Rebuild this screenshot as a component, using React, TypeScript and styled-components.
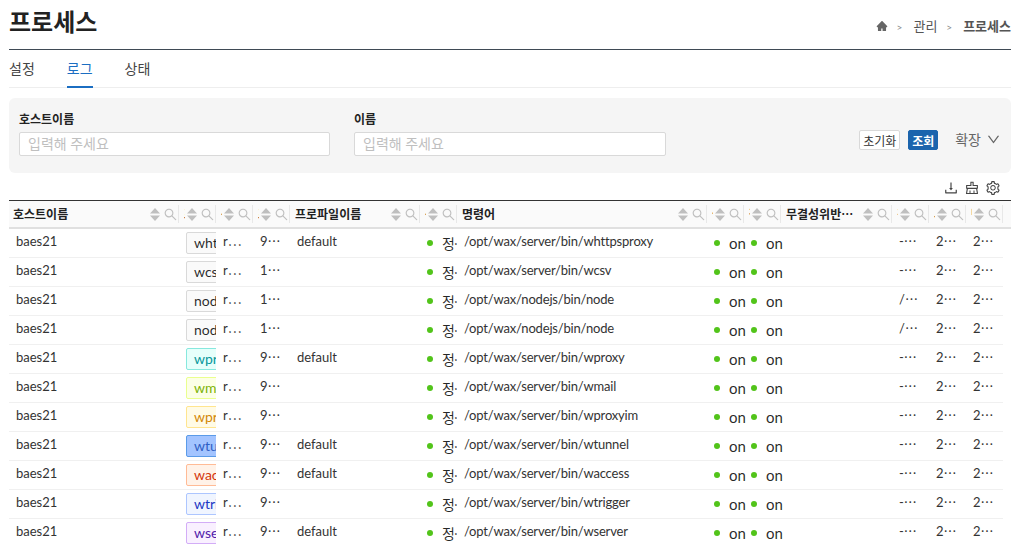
import {AiFillHome, AiOutlineClear, AiOutlineDown, AiOutlineDownload, AiOutlineSearch, AiOutlineSetting} from 'react-icons/ai';
import styled, {createGlobalStyle} from 'styled-components';

const GlobalStyle = createGlobalStyle`
  html, body {
    margin: 0;
    height: 545px;
    overflow: hidden;
    background: #fff;
    font-family: Lato, "Noto Sans CJK KR", sans-serif;
    font-size: 14px;
    color: rgba(0, 0, 0, 0.85);
  }
  * {
    box-sizing: border-box;
  }
`;

const COLUMNS = '170px 37px 37px 37px 130px 37px 250px 37px 37px 111px 37px 37px 37px';

const headers = [
  '호스트이름',
  '프로세스이름',
  '상태값',
  '프로세스아이디',
  '프로파일이름',
  '상태',
  '명령어',
  '실행',
  '감시',
  '무결성위반⋯',
  '경로',
  '시작시간',
  '변경시간',
];

const tagColors: Record<string, {bg: string; border: string; text: string}> = {
  plain: {bg: '#fafafa', border: '#d9d9d9', text: 'rgba(0,0,0,0.85)'},
  cyan: {bg: '#e6fffb', border: '#87e8de', text: '#08979c'},
  lime: {bg: '#fcffe6', border: '#eaff8f', text: '#7cb305'},
  gold: {bg: '#fffbe6', border: '#ffe58f', text: '#d48806'},
  blue: {bg: '#a3c4ff', border: '#5b9be8', text: '#2f5fc4'},
  volcano: {bg: '#fff2e8', border: '#ffbb96', text: '#d4380d'},
  geekblue: {bg: '#f0f5ff', border: '#adc6ff', text: '#1d39c4'},
  purple: {bg: '#f9f0ff', border: '#d3adf7', text: '#531dab'},
};

const rows = [
  {name: 'whttpsproxy', color: 'plain', pid: '9⋯', profile: 'default', command: '/opt/wax/server/bin/whttpsproxy', path: '-⋯'},
  {name: 'wcsv', color: 'plain', pid: '1⋯', profile: '', command: '/opt/wax/server/bin/wcsv', path: '-⋯'},
  {name: 'node', color: 'plain', pid: '1⋯', profile: '', command: '/opt/wax/nodejs/bin/node', path: '/⋯'},
  {name: 'node', color: 'plain', pid: '1⋯', profile: '', command: '/opt/wax/nodejs/bin/node', path: '/⋯'},
  {name: 'wproxy', color: 'cyan', pid: '9⋯', profile: 'default', command: '/opt/wax/server/bin/wproxy', path: '-⋯'},
  {name: 'wmail', color: 'lime', pid: '9⋯', profile: '', command: '/opt/wax/server/bin/wmail', path: '-⋯'},
  {name: 'wproxyim', color: 'gold', pid: '9⋯', profile: '', command: '/opt/wax/server/bin/wproxyim', path: '-⋯'},
  {name: 'wtunnel', color: 'blue', pid: '9⋯', profile: 'default', command: '/opt/wax/server/bin/wtunnel', path: '-⋯'},
  {name: 'waccess', color: 'volcano', pid: '9⋯', profile: 'default', command: '/opt/wax/server/bin/waccess', path: '-⋯'},
  {name: 'wtrigger', color: 'geekblue', pid: '9⋯', profile: '', command: '/opt/wax/server/bin/wtrigger', path: '-⋯'},
  {name: 'wserver', color: 'purple', pid: '9⋯', profile: 'default', command: '/opt/wax/server/bin/wserver', path: '-⋯'},
];

const Page = styled.div`
  padding: 0 8px 0 9px;
  height: 545px;
  overflow: hidden;
`;

const TitleBar = styled.header`
  display: flex;
  align-items: flex-end;
  justify-content: space-between;
  height: 50px;
  padding-bottom: 9px;
  border-bottom: 1px solid #3f4a55;
`;

const Title = styled.h1`
  margin: 0;
  font-size: 24px;
  line-height: 36px;
  font-weight: 700;
  color: #222;
`;

const Breadcrumb = styled.nav`
  display: flex;
  align-items: center;
  margin-bottom: 3px;
  font-size: 13px;
  line-height: 20px;
  color: #555;
`;

const HomeIcon = styled(AiFillHome)`
  font-size: 12px;
  color: #666;
`;

const Crumb = styled.span<{$current?: boolean}>`
  font-weight: ${(p) => (p.$current ? 700 : 400)};
`;

const CrumbSep = styled.span`
  margin: 2px 11px 0 9px;
  font-size: 10px;
  color: #888;
`;

const Tabs = styled.div`
  display: flex;
  gap: 32px;
  height: 38px;
  border-bottom: 1px solid #eee;
`;

const Tab = styled.div<{$active?: boolean}>`
  height: 38px;
  padding-top: 9px;
  font-size: 14px;
  line-height: 20px;
  color: ${(p) => (p.$active ? '#1b6ec2' : '#444')};
  border-bottom: ${(p) => (p.$active ? '2px solid #1b6ec2' : 'none')};
`;

const SearchPanel = styled.section`
  display: flex;
  align-items: flex-end;
  height: 75px;
  margin-top: 10px;
  padding: 14px 10px 17px;
  border-radius: 6px;
  background: #f5f5f5;
`;

const Field = styled.label<{$width: number}>`
  display: flex;
  flex-direction: column;
  gap: 4px;
  width: ${(p) => p.$width}px;
  margin-right: 24px;
`;

const FieldLabel = styled.span`
  font-size: 12px;
  line-height: 16px;
  font-weight: 700;
  color: #222;
`;

const TextInput = styled.input`
  height: 24px;
  padding: 0 8px 2px;
  border: 1px solid #d9d9d9;
  border-radius: 2px;
  background: #fff;
  font: inherit;
  font-size: 14px;
  &::placeholder {
    color: #bfbfbf;
  }
`;

const Actions = styled.div`
  display: flex;
  align-items: center;
  margin-left: auto;
  height: 20px;
  margin-bottom: 6px;
`;

const ResetButton = styled.button`
  height: 20px;
  width: 41px;
  margin-right: 8px;
  padding: 0;
  border: 1px solid #d9d9d9;
  border-radius: 2px;
  background: #fff;
  font: inherit;
  font-size: 12px;
  color: #333;
`;

const QueryButton = styled.button`
  height: 20px;
  width: 30px;
  margin-right: 17px;
  padding: 0;
  border: 1px solid #1b64ad;
  border-radius: 2px;
  background: #1b64ad;
  font: inherit;
  font-size: 12px;
  font-weight: 700;
  color: #fff;
`;

const ExpandLink = styled.span`
  display: flex;
  align-items: center;
  gap: 5px;
  margin-bottom: 2px;
  font-size: 14px;
  color: #666;
  svg {
    font-size: 15px;
  }
`;

const Toolbar = styled.div`
  display: flex;
  justify-content: flex-end;
  align-items: center;
  gap: 5px;
  height: 27px;
  padding: 3px 10px 0 0;
  font-size: 16px;
  color: #444;
`;

const Table = styled.div`
  border-top: 1px solid #333;
`;

const HeaderRow = styled.div`
  display: grid;
  grid-template-columns: ${COLUMNS};
  height: 28px;
  background: #fafafa;
  border-bottom: 2px solid #e0e0e0;
`;

const HeaderCell = styled.div`
  position: relative;
  display: flex;
  align-items: center;
  min-width: 0;
  padding: 0 1.5px 0 5px;
  &:first-child {
    padding-left: 4px;
  }
  &::after {
    content: '';
    position: absolute;
    right: 0;
    top: 4px;
    bottom: 4px;
    width: 1px;
    background: #e8e8e8;
  }
`;

const HeaderTitle = styled.span`
  flex: 1;
  min-width: 0;
  padding-bottom: 2px;
  overflow: hidden;
  white-space: nowrap;
  font-size: 12px;
  font-weight: 700;
  color: #222;
`;

const SortIcon = styled.svg`
  flex: none;
  width: 10px;
  height: 13px;
  margin: 0 2.5px 0 2px;
  fill: #bfbfbf;
`;

const SearchIcon = styled(AiOutlineSearch)`
  flex: none;
  font-size: 15px;
  color: #bfbfbf;
`;

const Row = styled.div`
  display: grid;
  grid-template-columns: ${COLUMNS};
  height: 29px;
  width: 994px;
  border-bottom: 1px solid #f0f0f0;
`;

const Cell = styled.div`
  min-width: 0;
  padding: 0 7px;
  font-size: 13px;
  line-height: 25px;
  color: #333;
  white-space: nowrap;
`;

const CommandCell = styled(Cell)`
  letter-spacing: -0.18px;
`;

const TagCell = styled.div`
  min-width: 0;
  padding: 3px 0 0 7px;
  overflow: hidden;
`;

const Tag = styled.span<{$color: string}>`
  display: inline-block;
  height: 22px;
  padding: 0 7px;
  border: 1px solid ${(p) => tagColors[p.$color].border};
  border-radius: 2px;
  background: ${(p) => tagColors[p.$color].bg};
  color: ${(p) => tagColors[p.$color].text};
  font-size: 14px;
  line-height: 20px;
  white-space: nowrap;
`;

const StatusCell = styled.div`
  display: flex;
  align-items: center;
  gap: 9px;
  min-width: 0;
  height: 27px;
  padding-left: 7px;
  font-size: 15px;
  white-space: nowrap;
`;

const ClippedStatus = styled(StatusCell)`
  font-size: 14px;
  letter-spacing: -1.5px;
  overflow: hidden;
`;

const Dot = styled.span`
  flex: none;
  width: 6px;
  height: 6px;
  border-radius: 50%;
  background: #52c41a;
`;

const App = () => {
  return (
    <Page>
      <GlobalStyle />
      <TitleBar>
        <Title>프로세스</Title>
        <Breadcrumb>
          <HomeIcon />
          <CrumbSep>&gt;</CrumbSep>
          <Crumb>관리</Crumb>
          <CrumbSep>&gt;</CrumbSep>
          <Crumb $current>프로세스</Crumb>
        </Breadcrumb>
      </TitleBar>
      <Tabs>
        <Tab>설정</Tab>
        <Tab $active>로그</Tab>
        <Tab>상태</Tab>
      </Tabs>
      <SearchPanel>
        <Field $width={311}>
          <FieldLabel>호스트이름</FieldLabel>
          <TextInput placeholder="입력해 주세요" />
        </Field>
        <Field $width={312}>
          <FieldLabel>이름</FieldLabel>
          <TextInput placeholder="입력해 주세요" />
        </Field>
        <Actions>
          <ResetButton>초기화</ResetButton>
          <QueryButton>조회</QueryButton>
          <ExpandLink>
            확장 <AiOutlineDown />
          </ExpandLink>
        </Actions>
      </SearchPanel>
      <Toolbar>
        <AiOutlineDownload />
        <AiOutlineClear />
        <AiOutlineSetting />
      </Toolbar>
      <Table>
        <HeaderRow>
          {headers.map((title) => (
            <HeaderCell key={title}>
              <HeaderTitle>{title}</HeaderTitle>
              <SortIcon viewBox="0 0 10 13">
                <path d="M0 5.5 5 0l5 5.5zM0 7.5h10L5 13z" />
              </SortIcon>
              <SearchIcon />
            </HeaderCell>
          ))}
        </HeaderRow>
        {rows.map((row, i) => (
          <Row key={i}>
            <Cell>baes21</Cell>
            <TagCell>
              <Tag $color={row.color}>{row.name}</Tag>
            </TagCell>
            <Cell>r⋯</Cell>
            <Cell>{row.pid}</Cell>
            <Cell>{row.profile}</Cell>
            <ClippedStatus>
              <Dot />
              정⋯
            </ClippedStatus>
            <CommandCell>{row.command}</CommandCell>
            <StatusCell>
              <Dot />
              on
            </StatusCell>
            <StatusCell>
              <Dot />
              on
            </StatusCell>
            <Cell />
            <Cell>{row.path}</Cell>
            <Cell>2⋯</Cell>
            <Cell>2⋯</Cell>
          </Row>
        ))}
      </Table>
    </Page>
  );
};

export default App;
